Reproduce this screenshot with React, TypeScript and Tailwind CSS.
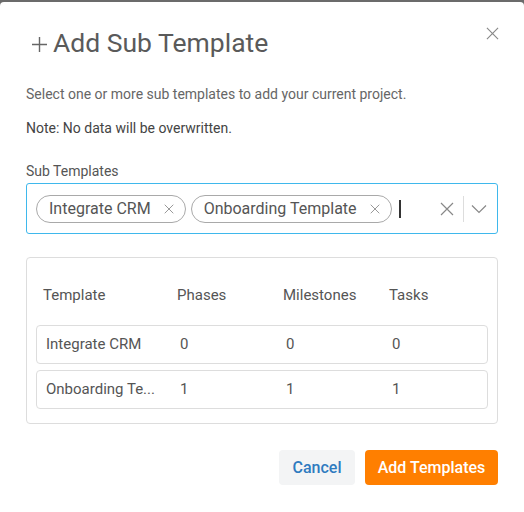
import React from 'react';

const XIcon = ({ size = 14, className = '' }: { size?: number; className?: string }) => (
  <svg width={size} height={size} viewBox="0 0 14 14" className={className} fill="none" stroke="currentColor" strokeWidth="1.2">
    <path d="M1 1 L13 13 M13 1 L1 13" />
  </svg>
);

const Chip = ({ label }: { label: string }) => (
  <div className="flex items-center h-[28px] rounded-full border border-[#a9a9a9] pl-[12px] pr-[11px] gap-[13px]">
    <span className="text-[16px] text-[#555]">{label}</span>
    <XIcon size={10} className="text-[#888]" />
  </div>
);

const rows = [
  { name: 'Integrate CRM', phases: 0, milestones: 0, tasks: 0 },
  { name: 'Onboarding Te...', phases: 1, milestones: 1, tasks: 1 },
];

export default function App() {
  return (
    <div className="w-[524px] h-[512px] bg-[#6b6b6b] pt-[2px] overflow-hidden" style={{ fontFamily: 'Roboto, "Liberation Sans", sans-serif' }}>
      <div className="bg-white h-full rounded-t-[4px] px-[26px] relative">
        <button className="absolute right-[25px] top-[25px] text-[#888]">
          <XIcon size={13} />
        </button>

        {/* Title */}
        <div className="pt-[26px] flex items-center h-[30px] box-content">
          <svg width="15" height="15" viewBox="0 0 15 15" fill="none" stroke="#666" strokeWidth="1.4" className="ml-[6px] mr-[6px] mt-[2px]">
            <path d="M7.5 0 V15 M0 7.5 H15" />
          </svg>
          <h1 className="text-[26.5px] text-[#5a5a5a] leading-[30px]">Add Sub Template</h1>
        </div>

        <p className="text-[14px] text-[#666] mt-[26px] leading-[20px]">Select one or more sub templates to add your current project.</p>
        <p className="text-[14px] text-[#444] mt-[14px] leading-[20px]">Note: No data will be overwritten.</p>

        {/* Select */}
        <label className="block text-[14px] text-[#555] mt-[23px] leading-[20px]">Sub Templates</label>
        <div className="mt-[2px] h-[51px] border border-[#3fb8ec] rounded-[3px] flex items-center pl-[9px] pr-[10px]">
          <div className="flex items-center gap-[5px]">
            <Chip label="Integrate CRM" />
            <Chip label="Onboarding Template" />
            <div className="w-[2px] h-[18px] bg-[#333] ml-[2px]" />
          </div>
          <div className="ml-auto flex items-center">
            <XIcon size={14} className="text-[#888]" />
            <div className="w-px h-[26px] bg-[#ddd] ml-[9px] mr-[7px]" />
            <svg width="16" height="10" viewBox="0 0 16 10" fill="none" stroke="#888" strokeWidth="1.2">
              <path d="M1 1.5 L8 8.5 L15 1.5" />
            </svg>
          </div>
        </div>

        {/* Table */}
        <div className="mt-[23px] border border-[#ddd] rounded-[4px] pt-[26px] pb-[14px]">
          <div className="grid grid-cols-[134px_106px_106px_1fr] px-[16px] text-[15px] text-[#555] leading-[22px]">
            <span>Template</span>
            <span>Phases</span>
            <span>Milestones</span>
            <span>Tasks</span>
          </div>
          <div className="mt-[19px] px-[9px] flex flex-col gap-[6px]">
            {rows.map((r, i) => (
              <div key={i} className="grid grid-cols-[134px_106px_106px_1fr] items-center h-[39px] px-[9px] border border-[#ddd] rounded-[4px] text-[15px] text-[#555]">
                <span>{r.name}</span>
                <span>{r.phases}</span>
                <span>{r.milestones}</span>
                <span>{r.tasks}</span>
              </div>
            ))}
          </div>
        </div>

        {/* Footer */}
        <div className="flex justify-end gap-[10px] mt-[26px]">
          <button className="h-[35px] w-[76px] rounded-[4px] bg-[#f3f4f5] text-[#2f7bc0] text-[16px] font-medium">Cancel</button>
          <button className="h-[35px] w-[133px] rounded-[4px] bg-[#ff7f00] text-white text-[16px] font-medium">Add Templates</button>
        </div>
      </div>
    </div>
  );
}
